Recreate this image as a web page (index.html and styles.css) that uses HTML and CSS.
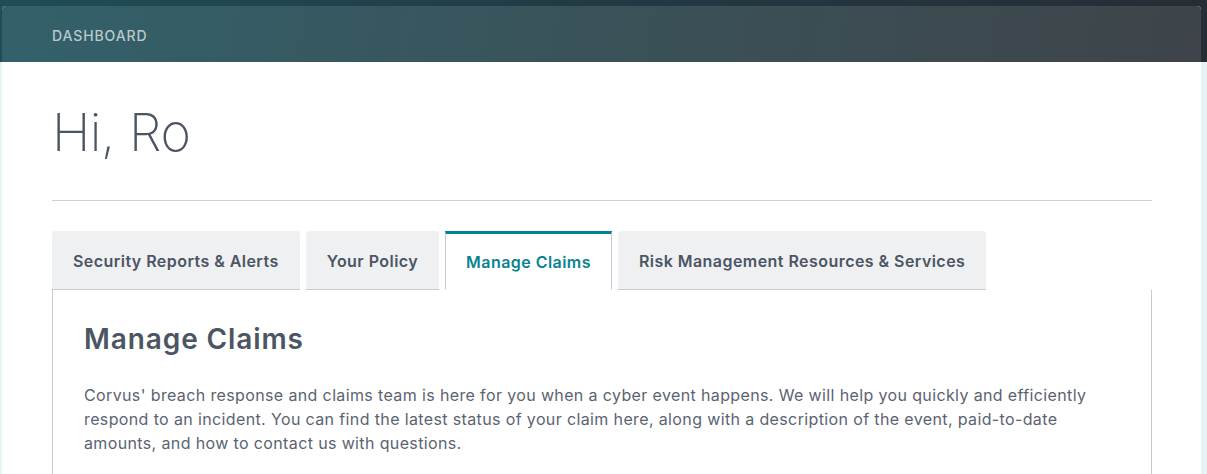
FILE: index.html
```html
<!DOCTYPE html>
<html lang="en">
<head>
<meta charset="utf-8">
<title>Dashboard</title>
<link rel="stylesheet" href="styles.css">
</head>
<body>
<div class="card">
  <header class="card-header">
    <span class="crumb">DASHBOARD</span>
  </header>
  <main class="card-body">
    <h1 class="greeting">Hi, Ro</h1>
    <hr class="divider">
    <nav class="tabs">
      <div class="tab">Security Reports &amp; Alerts</div>
      <div class="tab">Your Policy</div>
      <div class="tab active">Manage Claims</div>
      <div class="tab">Risk Management Resources &amp; Services</div>
    </nav>
    <section class="panel">
      <h2 class="panel-title">Manage Claims</h2>
      <p class="panel-text">Corvus' breach response and claims team is here for you when a cyber event happens. We will help you quickly and efficiently respond to an incident. You can find the latest status of your claim here, along with a description of the event, paid-to-date amounts, and how to contact us with questions.</p>
    </section>
  </main>
</div>
</body>
</html>
```
FILE: styles.css
```css
html, body {
  margin: 0;
  padding: 0;
}
body {
  font-family: "Inter", "Open Sans", sans-serif;
  background:
    linear-gradient(90deg, #1f4d58 0%, #223a44 50%, #262d35 100%) top left / 100% 62px no-repeat,
    #e8f3f5;
  height: 474px;
  overflow: hidden;
}
.card {
  margin: 6px 6px 0 2px;
  height: 468px;
  display: flex;
  flex-direction: column;
  background: #ffffff;
  border-radius: 4px 4px 0 0;
}
.card-header {
  flex: 0 0 56px;
  border-radius: 4px 4px 0 0;
  background: linear-gradient(100deg, #33616b 0%, #3a5259 50%, #3e4449 100%);
  display: flex;
  align-items: center;
  padding-left: 50px;
}
.crumb {
  color: #b9cace;
  font-size: 14px;
  font-weight: 500;
  letter-spacing: 0.9px;
  padding-top: 2px;
}
.card-body {
  flex: 1;
  display: flex;
  flex-direction: column;
  padding: 0 49px 0 50px;
}
.greeting {
  margin: 0;
  padding-top: 39px;
  font-size: 52px;
  font-weight: 200;
  color: #4a5462;
  line-height: 64px;
  letter-spacing: -0.5px;
}
.divider {
  margin: 35px 0 0 0;
  border: 0;
  border-top: 1px solid #cbd0d6;
}
.tabs {
  display: flex;
  gap: 6px;
  margin-top: 30px;
  flex: 0 0 59px;
}
.tab {
  display: flex;
  align-items: center;
  padding: 1px 21px 0 21px;
  background: #eff0f2;
  border-radius: 3px 3px 0 0;
  color: #4b5563;
  font-size: 16px;
  font-weight: 600;
  letter-spacing: 0.45px;
  border-bottom: 1px solid #c5cbd3;
}
.tab.active {
  background: #ffffff;
  color: #0a8391;
  border-top: 3px solid #00828f;
  border-left: 1px solid #c5cbd3;
  border-right: 1px solid #c5cbd3;
  border-bottom: 1px solid #ffffff;
  border-radius: 0;
  padding: 0 20px;
}
.panel {
  flex: 1;
  border-left: 1px solid #c5cbd3;
  border-right: 1px solid #c5cbd3;
  padding: 31px 31px 0 31px;
}
.panel-title {
  margin: 0;
  font-size: 28px;
  font-weight: 600;
  color: #4b5563;
  line-height: 36px;
  letter-spacing: 0.9px;
}
.panel-text {
  margin: 26px 0 0 0;
  font-size: 16px;
  line-height: 24px;
  color: #5b6371;
  letter-spacing: 0.37px;
}
```
